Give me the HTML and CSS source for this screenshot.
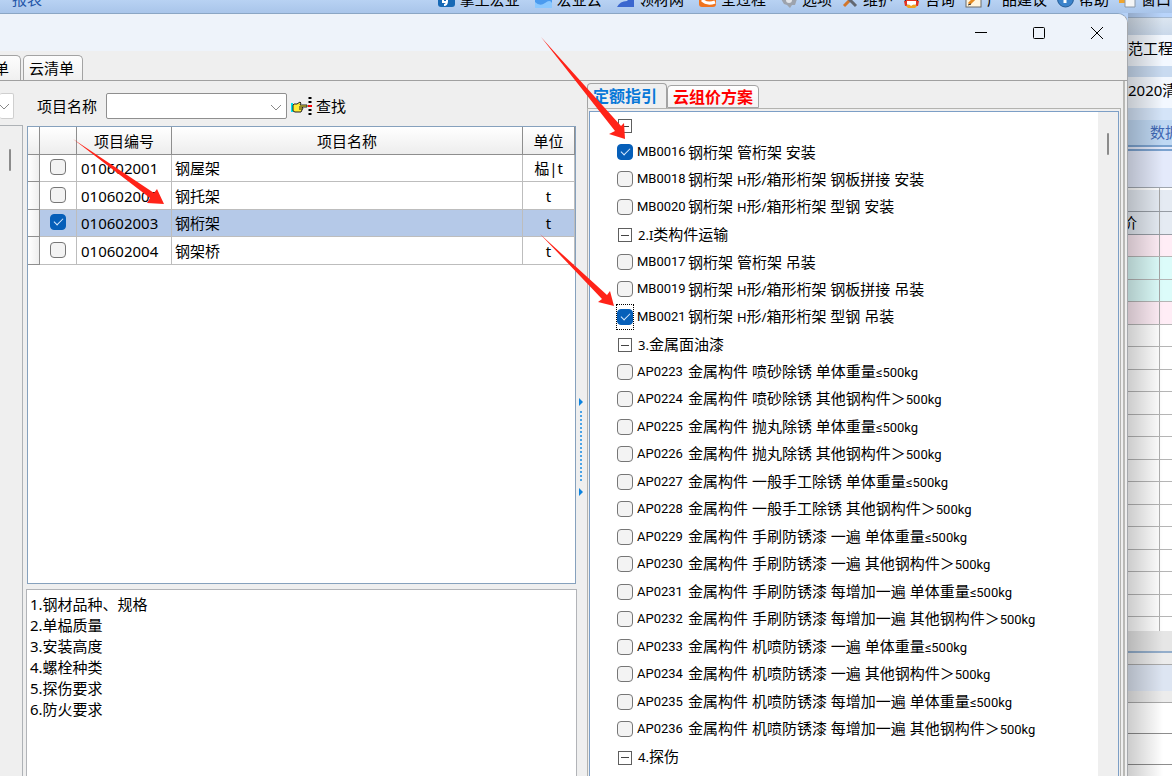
FILE: index.html
```html
<!DOCTYPE html>
<html lang="zh-CN">
<head>
<meta charset="utf-8">
<title>清单指引</title>
<link rel="stylesheet" href="styles.css">
</head>
<body>
<header class="toolbar">
  <a class="menu-link" href="#">报表</a>
  <nav class="tools">
    <button class="tool wide"><svg width="17" height="20"><rect width="17" height="18" rx="3" fill="#1769b5"/><path d="M5 8v5h4M9 8v4q0 4-3 4" stroke="#fff" stroke-width="2" fill="none"/></svg>掌上宏业</button>
    <button class="tool wide"><svg width="17" height="20"><rect width="17" height="19" fill="#4b9bef"/><path d="M0 13q5 5 10 1t7 0v5H0z" fill="#8ac8ff"/></svg>宏业云</button>
    <button class="tool wide"><svg width="17" height="20"><path d="M17 4v14H0Q3 12 10 12z" fill="#3b67cf"/></svg>领材网</button>
    <button class="tool wide"><svg width="17" height="20"><rect width="17" height="18" rx="3" fill="#f07420"/><path d="M3 11q5 5 13 2" stroke="#fff" stroke-width="3" fill="none"/></svg>全过程</button>
    <button class="tool"><svg width="16" height="20"><path d="M2 5h12l2 5-2 6-3 0-2 3-3-3-3-1-3-5z" fill="#9da3ad"/><circle cx="8" cy="11" r="3" fill="#e2e5ea"/></svg>选项</button>
    <button class="tool"><svg width="16" height="20"><path d="M2 17 14 5" stroke="#d2762c" stroke-width="3"/><path d="M2 5 14 17" stroke="#626872" stroke-width="3"/></svg>维护</button>
    <button class="tool"><svg width="17" height="20"><path d="M1 9l2 7h11l2-7-4-5H5z" fill="#353535"/><ellipse cx="8.500" cy="13" rx="5" ry="5" fill="#fff"/><path d="M3 9h11v3H3z" fill="#e33322"/><path d="M1 12l3 0 0 5-2 0zM13 12h3l-1 5h-2z" fill="#e33322"/><path d="M3 17q3-3 5 0 3-3 6 0l-2 2H5z" fill="#efa321"/></svg>咨询</button>
    <button class="tool"><svg width="17" height="20"><rect x="1" y="2" width="15" height="16" fill="#fff5df" stroke="#6b6b6b"/><path d="m4 15 9-9" stroke="#e58a22" stroke-width="3"/><path d="m3 16 3-1" stroke="#333"/></svg>产品建议</button>
    <button class="tool"><svg width="17" height="20"><circle cx="8.500" cy="10" r="8" fill="#3b83cb" stroke="#275d96"/><path d="M8 8v6" stroke="#fff" stroke-width="3"/></svg>帮助</button>
    <button class="tool"><svg width="17" height="20"><path d="M0 5h8v9H0z" fill="#efa52e"/><path d="M6 8h10v10H6z" fill="#f4f5f6" stroke="#8b98a8"/></svg>窗口</button>
  </nav>
</header>
<div class="workspace">
  <section class="dialog">
    <div class="titlebar">
      <button class="win" aria-label="最小化"><svg width="14" height="14"><path d="M1 6.500h12" stroke="#000"/></svg></button>
      <button class="win" aria-label="最大化"><svg width="14" height="14"><rect x="1.500" y="1.500" width="11" height="11" rx="1" fill="none" stroke="#000"/></svg></button>
      <button class="win" aria-label="关闭"><svg width="14" height="14"><path d="m1 1 12 12M13 1 1 13" stroke="#000" fill="none"/></svg></button>
    </div>
    <div class="tabs">
      <button class="tab first">清单</button>
      <button class="tab">云清单</button>
    </div>
    <div class="content">
      <div class="left">
        <form class="filter">
          <span class="combo stub"><select aria-label="专业"><option></option></select><svg width="10" height="6"><path d="m0 0 5 5 5-5" stroke="#888" fill="none"/></svg></span>
          <label for="pname">项目名称</label>
          <span class="combo"><select id="pname"><option></option></select><svg width="12" height="7"><path d="m1 1 5 5 5-5" stroke="#888" fill="none"/></svg></span>
          <button type="button" class="find">
            <svg width="21" height="18"><path d="M0 6h2v9H0z" fill="#00e5f0"/><path d="M3 7h3l3-2 1 1-1 2h7v2h-5l1 1-1 2-1 2H4l-2-1V8z" fill="#ffee37" stroke="#222"/><path d="M8 10h3M8 12h3" stroke="#222"/><path d="M19 0v18" stroke="#000" stroke-width="3" stroke-dasharray="2 2"/><path d="M17 8h4v2h-4z" fill="#f00"/></svg>查找
          </button>
        </form>
        <div class="panes">
          <div class="chapter"><i class="thumb"></i></div>
          <div class="lists">
            <div class="gridbox">
              <table>
                <colgroup><col class="c-ind"><col class="c-chk"><col class="c-code"><col><col class="c-unit"></colgroup>
                <thead><tr><th></th><th></th><th>项目编号</th><th>项目名称</th><th>单位</th></tr></thead>
                <tbody>
                  <tr><td></td><td><input type="checkbox" aria-label="010602001"></td><td>010602001</td><td>钢屋架</td><td>榀|t</td></tr>
                  <tr><td></td><td><input type="checkbox" aria-label="010602002"></td><td>010602002</td><td>钢托架</td><td>t</td></tr>
                  <tr class="selected"><td></td><td><input type="checkbox" aria-label="010602003" checked></td><td>010602003</td><td>钢桁架</td><td>t</td></tr>
                  <tr><td></td><td><input type="checkbox" aria-label="010602004"></td><td>010602004</td><td>钢架桥</td><td>t</td></tr>
                </tbody>
              </table>
            </div>
            <textarea class="notes" aria-label="项目特征">1.钢材品种、规格
2.单榀质量
3.安装高度
4.螺栓种类
5.探伤要求
6.防火要求</textarea>
          </div>
        </div>
      </div>
      <div class="splitter"><i class="tri"></i><i class="dots"></i><i class="tri"></i></div>
      <div class="right">
        <div class="rtabs"><button class="rtab active">定额指引</button><button class="rtab hot">云组价方案</button></div>
        <div class="treeframe">
          <div class="treebox">
            <ul class="tree">
              <li><button class="fold" aria-label="折叠"></button></li>
              <li><label><input type="checkbox" checked><b>MB0016</b><span>钢桁架 管桁架 安装</span></label></li>
              <li><label><input type="checkbox"><b>MB0018</b><span>钢桁架 <small>H</small>形<small>/</small>箱形桁架 钢板拼接 安装</span></label></li>
              <li><label><input type="checkbox"><b>MB0020</b><span>钢桁架 <small>H</small>形<small>/</small>箱形桁架 型钢 安装</span></label></li>
              <li><button class="fold" aria-label="折叠"></button><span><small>2.I</small>类构件运输</span></li>
              <li><label><input type="checkbox"><b>MB0017</b><span>钢桁架 管桁架 吊装</span></label></li>
              <li><label><input type="checkbox"><b>MB0019</b><span>钢桁架 <small>H</small>形<small>/</small>箱形桁架 钢板拼接 吊装</span></label></li>
              <li><label><span class="ring"><input type="checkbox" checked></span><b>MB0021</b><span>钢桁架 <small>H</small>形<small>/</small>箱形桁架 型钢 吊装</span></label></li>
              <li><button class="fold" aria-label="折叠"></button><span><small>3.</small>金属面油漆</span></li>
              <li><label><input type="checkbox"><b>AP0223</b><span>金属构件 喷砂除锈 单体重量<small class="qty">≤500kg</small></span></label></li>
              <li><label><input type="checkbox"><b>AP0224</b><span>金属构件 喷砂除锈 其他钢构件＞<small class="qty">500kg</small></span></label></li>
              <li><label><input type="checkbox"><b>AP0225</b><span>金属构件 抛丸除锈 单体重量<small class="qty">≤500kg</small></span></label></li>
              <li><label><input type="checkbox"><b>AP0226</b><span>金属构件 抛丸除锈 其他钢构件＞<small class="qty">500kg</small></span></label></li>
              <li><label><input type="checkbox"><b>AP0227</b><span>金属构件 一般手工除锈 单体重量<small class="qty">≤500kg</small></span></label></li>
              <li><label><input type="checkbox"><b>AP0228</b><span>金属构件 一般手工除锈 其他钢构件＞<small class="qty">500kg</small></span></label></li>
              <li><label><input type="checkbox"><b>AP0229</b><span>金属构件 手刷防锈漆 一遍 单体重量<small class="qty">≤500kg</small></span></label></li>
              <li><label><input type="checkbox"><b>AP0230</b><span>金属构件 手刷防锈漆 一遍 其他钢构件＞<small class="qty">500kg</small></span></label></li>
              <li><label><input type="checkbox"><b>AP0231</b><span>金属构件 手刷防锈漆 每增加一遍 单体重量<small class="qty">≤500kg</small></span></label></li>
              <li><label><input type="checkbox"><b>AP0232</b><span>金属构件 手刷防锈漆 每增加一遍 其他钢构件＞<small class="qty">500kg</small></span></label></li>
              <li><label><input type="checkbox"><b>AP0233</b><span>金属构件 机喷防锈漆 一遍 单体重量<small class="qty">≤500kg</small></span></label></li>
              <li><label><input type="checkbox"><b>AP0234</b><span>金属构件 机喷防锈漆 一遍 其他钢构件＞<small class="qty">500kg</small></span></label></li>
              <li><label><input type="checkbox"><b>AP0235</b><span>金属构件 机喷防锈漆 每增加一遍 单体重量<small class="qty">≤500kg</small></span></label></li>
              <li><label><input type="checkbox"><b>AP0236</b><span>金属构件 机喷防锈漆 每增加一遍 其他钢构件＞<small class="qty">500kg</small></span></label></li>
              <li><button class="fold" aria-label="折叠"></button><span><small>4.</small>探伤</span></li>
              <li><input type="checkbox" aria-label="定额"></li>
            </ul>
            <div class="scroll"><i class="thumb"></i></div>
          </div>
        </div>
      </div>
    </div>
  </section>
  <aside class="behind">
    <div class="b-edge"></div>
    <div class="b-cap"></div>
    <div class="b-field">范工程</div>
    <div class="b-gap"></div>
    <div class="b-field">2020清</div>
    <div class="b-pale"></div>
    <div class="b-group">数据</div>
    <div class="b-band"></div>
    <div class="b-grid">
      <div class="b-row head"></div><div class="b-row head">价</div>
      <div class="b-row pink"></div><div class="b-row cyan"></div><div class="b-row cyan"></div><div class="b-row pink"></div>
      <div class="b-row"></div><div class="b-row"></div><div class="b-row"></div><div class="b-row"></div><div class="b-row"></div><div class="b-row"></div><div class="b-row"></div><div class="b-row"></div><div class="b-row"></div><div class="b-row"></div><div class="b-row"></div><div class="b-row"></div><div class="b-row"></div><div class="b-row last"></div>
    </div>
    <div class="b-foot"></div>
    <div class="b-sub"></div>
    <div class="b-tab"></div>
    <div class="b-sub"></div>
    <div class="b-line"></div><div class="b-line"></div><div class="b-line"></div>
  </aside>
</div>
<svg class="marks" width="660" height="320" aria-hidden="true">
  <g fill="#ff2318">
    <path d="m541 37 80 89 3-3 1 16-16-5 6-3z"/>
    <path d="m73 139 81 54 3-4 7 15-17-1 3-5z"/>
    <path d="m540 234 67 61 3-4 4 15-16-4 4-3z"/>
  </g>
</svg>
</body>
</html>
```
FILE: styles.css
```css
* { box-sizing: border-box; }
body {
  margin: 0;
  height: 100vh;
  overflow: hidden;
  display: flex;
  flex-direction: column;
  font: 15px/20px "Noto Sans", "Noto Sans CJK SC", sans-serif;
  color: #000;
  background: #efefef;
}
button, select, textarea { font: inherit; color: inherit; margin: 0; padding: 0; border: 0; background: none; }
ul { list-style: none; margin: 0; padding: 0; }

.toolbar {
  flex: none;
  height: 13px;
  display: flex;
  align-items: flex-end;
  justify-content: space-between;
  padding: 0 1px 4px 12px;
  overflow: hidden;
  background: linear-gradient(#b8d2f3, #a9c5ea);
}
.menu-link { color: #2456a8; text-decoration: none; }
.tools { display: flex; }
.tool { display: flex; align-items: center; gap: 5px; margin-left: 10px; white-space: nowrap; }
.tool.wide + .tool { margin-left: 15px; }

.workspace { flex: 1; min-height: 0; display: flex; background: linear-gradient(#b4d0f6 0 14px, #efefef 14px); }
.dialog {
  flex: 1;
  min-width: 0;
  display: flex;
  flex-direction: column;
  background: #efefef;
  border-top: 1px solid #8ba6c4;
  border-right: 1px solid #a5a8ac;
  border-radius: 0 10px 0 0;
  overflow: hidden;
}
.titlebar {
  flex: none;
  height: 37px;
  display: flex;
  justify-content: flex-end;
  padding-right: 1px;
  background: #eef3fa;
}
.win { width: 58px; display: flex; align-items: center; justify-content: center; }

.tabs { flex: none; height: 30px; display: flex; align-items: flex-end; gap: 2px; padding-top: 4px; border-bottom: 1px solid #a0a0a0; }
.tab {
  height: 25px;
  padding: 0 8px 0 5px;
  border: 1px solid #a3a3a3;
  border-bottom: 0;
  border-radius: 5px 5px 0 0;
  background: linear-gradient(#fdfdfd, #f0f0f0);
}
.tab.first { width: 21px; padding: 0 11px 0 0; border-left: 0; display: flex; align-items: center; justify-content: flex-end; border-radius: 0 5px 0 0; white-space: nowrap; overflow: hidden; }

.content { flex: 1; min-height: 0; display: flex; margin-right: 2px; border-right: 2px solid #b9b9b6; }
.left { flex: 0 0 577px; display: flex; flex-direction: column; padding-top: 12px; }
.filter { flex: none; height: 26px; display: flex; align-items: center; }
.combo { position: relative; width: 181px; height: 26px; margin-left: 9px; }
.combo select { appearance: none; width: 100%; height: 100%; background: #fff; border: 1px solid #8f8f8f; border-radius: 2px; }
.combo svg { position: absolute; right: 5px; top: 11px; }
.combo.stub { width: 14px; margin: 0 23px 0 0; }
.combo.stub select { border-color: #cfcfcf; border-left: 0; }
.find { display: flex; align-items: center; gap: 4px; margin-left: 4px; }

.panes { flex: 1; min-height: 0; display: flex; gap: 3px; padding-top: 6px; }
.chapter { width: 23px; border: 1px solid #aeb2b6; border-left: 0; border-bottom: 0; padding: 23px 0 0 9px; }
.thumb { display: block; width: 2px; height: 22px; background: #8b8b8b; border-radius: 1px; }
.lists { flex: 1; min-width: 0; display: flex; flex-direction: column; gap: 5px; padding-top: 1px; }
.gridbox { flex: 0 0 458px; margin: 0 1px; border: 1px solid #86a1bd; background: #fff; }
.notes {
  flex: 1;
  display: block;
  resize: none;
  border: 1px solid #b2b4b8;
  border-bottom: 0;
  background: #fff;
  padding: 4px 3px;
  line-height: 21px;
  outline: 0;
}

table { width: 100%; table-layout: fixed; border-collapse: separate; border-spacing: 0; }
.c-ind { width: 12px; }
.c-chk { width: 37px; }
.c-code { width: 95px; }
.c-unit { width: 52px; }
th, td { padding: 0; height: 28px; border-right: 1px solid #bdbdbd; border-bottom: 1px solid #bdbdbd; font-weight: normal; line-height: 20px; }
th { background: linear-gradient(#fff, #ededed); border-color: #8e8e8e; }
tbody tr:nth-child(odd) td { height: 27px; }
td { padding: 0 3px; }
td:first-child { padding: 0; background: linear-gradient(90deg, #fff, #eee); border-color: #8e8e8e; }
td:nth-child(2), td:last-child { text-align: center; padding: 0; }
td:nth-child(3) { padding: 0 4px; }
.selected td:not(:first-child) { background: #b5c9e8; }

input[type="checkbox"] {
  appearance: none;
  flex: none;
  display: flex;
  align-items: center;
  justify-content: center;
  width: 16px;
  height: 16px;
  margin: 0;
  border: 1px solid #767676;
  border-radius: 4px;
  background: #f3f3f3;
}
td input[type="checkbox"] { margin: 0 auto 2px; }
input[type="checkbox"]:checked { background: #065fb9; border-color: #065fb9; }
input[type="checkbox"]:checked::after {
  content: "";
  width: 8px;
  height: 4px;
  margin-bottom: 3px;
  border: solid #d8eaff;
  border-width: 0 0 1px 1px;
  transform: rotate(-45deg);
}

.splitter { flex: 0 0 10px; display: flex; flex-direction: column; align-items: center; padding: 317px 2px 0 0; gap: 5px; }
.tri { border: solid transparent; border-width: 4px 0 4px 4px; border-left-color: #0c83df; }
.dots { height: 72px; width: 2px; background: repeating-linear-gradient(#4ba3e6 0 2px, transparent 2px 4px); }

.right { flex: 1; min-width: 0; display: flex; flex-direction: column; padding-top: 2px; }
.rtabs { flex: none; height: 25px; display: flex; align-items: flex-end; }
.rtab { font-size: 16px; font-weight: bold; height: 23px; border: 1px solid #a3a3a3; border-radius: 4px 4px 0 0; white-space: nowrap; }
.rtab.active { width: 80px; height: 25px; padding-right: 4px; color: #0878d8; border-bottom: 0; }
.rtab.hot { width: 92px; color: #f00; background: linear-gradient(#fff, #f3f3f3); }
.treeframe { flex: 1; min-height: 0; display: flex; margin-right: 2px; padding: 2px 1px 0; border: solid #b3b3b0; border-width: 1px 1px 0 1px; }
.treebox { flex: 1; min-width: 0; display: flex; border: 1px solid #7d9fc6; border-bottom: 0; background: #fff; overflow: hidden; }
.tree { flex: 1; min-width: 0; padding-left: 27px; }
.tree li, .tree label { display: flex; align-items: center; white-space: nowrap; }
.tree li { height: 27px; }
.tree li:nth-child(odd) { height: 28px; }
.tree li:first-child { height: 26px; }
.tree b { flex: none; width: 51px; margin-left: 4px; font: 13px/20px Roboto, sans-serif; }
.tree small { font-size: 13px; }
.tree .qty { font-family: Roboto, sans-serif; }
.fold {
  flex: none;
  width: 14px;
  height: 14px;
  margin: 2px 6px 0 1px;
  border: 1px solid #5e5e5e;
  background: linear-gradient(#444, #444) center / 8px 1px no-repeat #fff;
}
.ring { padding: 4px 0; outline: 1px dotted #000; }
.scroll { flex: 0 0 20px; background: #efefef; padding: 21px 0 0 9px; }

.behind {
  flex: 0 0 44px;
  display: flex;
  flex-direction: column;
  overflow: hidden;
  position: relative;
  white-space: nowrap;
}
.behind::after { content: ""; position: absolute; inset: 0; background: linear-gradient(90deg, rgba(0, 0, 0, .2), transparent 80%); }
.behind > div { flex: none; }
.b-edge { height: 4px; background: #b8d4fb; }
.b-cap { height: 18px; background: linear-gradient(#dbe5f0, #c9d8ea); border-top: 1px solid #a4b8d0; }
.b-field { height: 31px; padding-top: 3px; background: #f3f8ff; }
.b-gap { height: 11px; background: #c8daf0; }
.b-pale { height: 12px; background: #d4e4f8; }
.b-group { height: 25px; padding: 2px 0 0 22px; color: #3f68b5; background: #bfd8f3; }
.b-band { height: 43px; background: #e4eafb; border-top: 6px double #7ba2cf; border-bottom: 1px solid #a0a6ae; }
.b-grid { padding-top: 2px; background: linear-gradient(90deg, #fff 31px, #b0b0b0 31px 32px, #fff 32px); }
.b-row { height: 22px; border-bottom: 1px solid #b5b5b5; }
.b-row:nth-child(even) { height: 23px; }
.b-row.head, .b-row.pink, .b-row.cyan { background: linear-gradient(90deg, var(--c) 31px, #a5a5a5 31px 32px, var(--c) 32px); }
.b-row.head { --c: #e5ebf3; text-indent: -6px; border-color: #969ca4; }
.b-row.pink { --c: #ffedf6; }
.b-row.cyan { --c: #dcfcfa; }
.b-row.last { height: 14px; border: 0; }
.b-foot { height: 22px; background: #e6e6e6; border-bottom: 2px solid #94aecb; }
.b-sub { height: 12px; background: #ececec; border-bottom: 1px solid #aaa; }
.b-tab { height: 26px; background: #dde5f2; }
.b-line { height: 31px; background: #fff; border-bottom: 1px solid #8d8d8d; }

.marks { position: absolute; left: 0; top: 0; pointer-events: none; }
```
